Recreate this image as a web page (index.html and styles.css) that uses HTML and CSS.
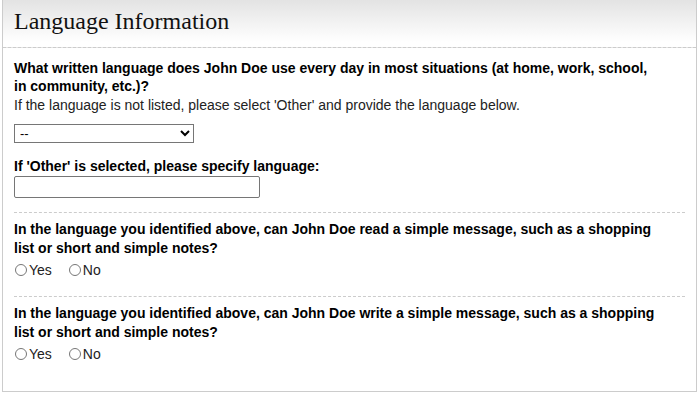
FILE: index.html
```html
<!DOCTYPE html>
<html lang="en">
<head>
    <meta charset="UTF-8">
    <meta name="viewport" content="width=device-width, initial-scale=1.0">
    <title>Language Information</title>
    <link rel="stylesheet" href="styles.css">
</head>
<body>
    <div class="panel">
        <div class="panel-header">
            <h2>Language Information</h2>
        </div>

        <div class="panel-body">
            <div class="field">
                <label class="question" for="written-language">What written language does John Doe use every day in most situations (at home, work, school, in community, etc.)?</label>
                <div class="hint">If the language is not listed, please select 'Other' and provide the language below.</div>
                <select id="written-language" class="lang-select">
                    <option>--</option>
                    <option>English</option>
                    <option>Spanish</option>
                    <option>Other</option>
                </select>
            </div>

            <div class="field">
                <label class="question" for="other-language">If 'Other' is selected, please specify language:</label>
                <input type="text" id="other-language" class="text-input">
            </div>

            <div class="field divided">
                <div class="question">In the language you identified above, can John Doe read a simple message, such as a shopping list or short and simple notes?</div>
                <div class="radios">
                    <label><input type="radio" name="can-read" value="yes">Yes</label>
                    <label><input type="radio" name="can-read" value="no">No</label>
                </div>
            </div>

            <div class="field divided">
                <div class="question">In the language you identified above, can John Doe write a simple message, such as a shopping list or short and simple notes?</div>
                <div class="radios">
                    <label><input type="radio" name="can-write" value="yes">Yes</label>
                    <label><input type="radio" name="can-write" value="no">No</label>
                </div>
            </div>
        </div>
    </div>
</body>
</html>
```

FILE: styles.css
```css
/* Base */
* {
    box-sizing: border-box;
}

body {
    margin: 0;
    padding: 0 2px;
    background-color: #fff;
    color: #000;
    font-family: 'Liberation Sans', Arial, sans-serif;
    font-size: 14px;
}

/* Panel */
.panel {
    height: 392px;
    border: 1px solid #ccc;
    border-top: none;
    background-color: #fff;
}

.panel-header {
    height: 48px;
    padding: 6px 11px 0;
    background: linear-gradient(#e3e3e3, #fff 42px);
    border-bottom: 1px dashed #ccc;
}

.panel-header h2 {
    margin: 0;
    font-family: 'Liberation Serif', 'Times New Roman', serif;
    font-size: 24px;
    font-weight: normal;
    line-height: 30px;
    color: #111;
}

.panel-body {
    padding: 11px 11px 0;
}

/* Fields */
.field {
    margin-bottom: 14px;
}

.question {
    display: block;
    max-width: 644px;
    font-weight: bold;
    line-height: 18px;
}

.hint {
    margin-top: 1px;
    line-height: 18px;
    color: #222;
}

.lang-select {
    display: block;
    width: 180px;
    height: 19px;
    margin-top: 10px;
    padding: 0 1px;
    border: 1px solid #767676;
    border-radius: 0;
    background-color: #fff;
    font-family: 'Liberation Sans', Arial, sans-serif;
    font-size: 13px;
}

.text-input {
    display: block;
    width: 246px;
    height: 22px;
    margin-top: 1px;
    border: 1px solid #767676;
    border-radius: 2px;
}

.divided {
    border-top: 1px dashed #ccc;
    padding-top: 7px;
    margin-bottom: 16px;
}

.divided .question {
    line-height: 19px;
}

/* Radios */
.radios {
    display: flex;
    gap: 16px;
    margin-top: 2px;
    line-height: 20px;
    color: #222;
}

.radios label {
    display: flex;
    align-items: center;
}

.radios input {
    width: 12px;
    height: 12px;
    margin: 0 2px 0 1px;
}
```
